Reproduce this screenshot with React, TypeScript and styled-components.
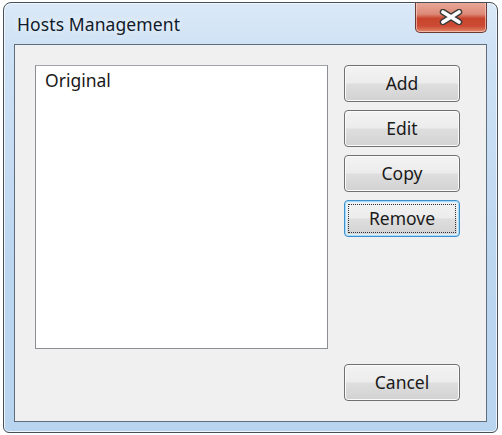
import React from "react";
import styled, { createGlobalStyle } from "styled-components";

const Global = createGlobalStyle`
  html, body { margin: 0; padding: 0; background: #ffffff; }
  body { font-family: "Noto Sans", "Open Sans", sans-serif; }
`;

const Window = styled.div`
  box-sizing: border-box;
  margin: 2px 0 0 3px;
  width: 495px;
  height: 431px;
  border: 1px solid #4a4f55;
  border-radius: 8px 8px 6px 6px;
  background: linear-gradient(180deg, #dbe9f7 0%, #cfe2f5 10%, #bcd6f0 60%, #b8d4ef 100%);
  box-shadow: inset 0 0 0 1px #eef5fc;
  display: flex;
  flex-direction: column;
  overflow: hidden;
`;

const TitleBar = styled.div`
  height: 41px;
  display: flex;
  align-items: flex-start;
  justify-content: space-between;
  padding: 0 10px 0 13px;
`;

const Title = styled.div`
  margin-top: 9px;
  font-size: 17.5px;
  color: #111a2a;
  letter-spacing: 0.1px;
  text-shadow: 0 0 6px rgba(255, 255, 255, 0.9);
`;

const CloseButton = styled.div`
  box-sizing: border-box;
  width: 72px;
  height: 31px;
  margin-top: -1px;
  border: 1px solid #6b3a33;
  border-top: none;
  border-radius: 0 0 5px 5px;
  background: linear-gradient(180deg, #e9a99a 0%, #dd8a78 40%, #c8442d 55%, #cc4a33 80%, #e08a6a 100%);
  box-shadow: inset 0 0 0 1px rgba(255, 220, 210, 0.6);
  display: flex;
  align-items: center;
  justify-content: center;
`;

const Client = styled.div`
  box-sizing: border-box;
  margin: 0 10px 10px 10px;
  flex: 1;
  border: 1px solid #5f6d7c;
  background: #f0f0f0;
  display: flex;
  padding: 20px 26px 20px 20px;
  gap: 16px;
`;

const ListBox = styled.div`
  box-sizing: border-box;
  width: 294px;
  height: 284px;
  border: 1px solid #8b8f94;
  border-top-color: #a0a4a9;
  background: #ffffff;
  padding: 2px 9px;
  font-size: 17.5px;
  color: #1a1a1a;
`;

const ButtonColumn = styled.div`
  display: flex;
  flex-direction: column;
  gap: 8px;
  width: 116px;
`;

const Spacer = styled.div`
  flex: 1;
`;

const Button = styled.div<{ $focused?: boolean }>`
  box-sizing: border-box;
  width: 116px;
  height: 37px;
  padding-bottom: 2px;
  border-radius: 4px;
  border: 1px solid ${(p) => (p.$focused ? "#3d8fd0" : "#707070")};
  background: linear-gradient(180deg, #f3f3f3 0%, #ececec 48%, #dedede 52%, #d2d2d2 100%);
  box-shadow: ${(p) =>
    p.$focused
      ? "inset 0 0 0 1px #a8dcf5, inset 0 0 0 2px #dff2fb"
      : "inset 0 0 0 1px #fbfbfb"};
  display: flex;
  align-items: center;
  justify-content: center;
  font-size: 17.5px;
  color: #1a1a1a;
  position: relative;
`;

const FocusRing = styled.span`
  position: absolute;
  inset: 3px;
  border: 1px dotted #333;
  pointer-events: none;
`;

export default function App() {
  return (
    <>
      <Global />
      <Window>
        <TitleBar>
          <Title>Hosts Management</Title>
          <CloseButton>
            <svg width="26" height="16" viewBox="0 0 26 16">
              <path
                d="M5 3 L21 13 M21 3 L5 13"
                stroke="#3a3a3a"
                strokeWidth="6.5"
                strokeLinecap="round"
              />
              <path
                d="M5 3 L21 13 M21 3 L5 13"
                stroke="#ffffff"
                strokeWidth="3.8"
                strokeLinecap="round"
              />
            </svg>
          </CloseButton>
        </TitleBar>
        <Client>
          <ListBox>Original</ListBox>
          <ButtonColumn>
            <Button>Add</Button>
            <Button>Edit</Button>
            <Button>Copy</Button>
            <Button $focused>
              Remove
              <FocusRing />
            </Button>
            <Spacer />
            <Button>Cancel</Button>
          </ButtonColumn>
        </Client>
      </Window>
    </>
  );
}
